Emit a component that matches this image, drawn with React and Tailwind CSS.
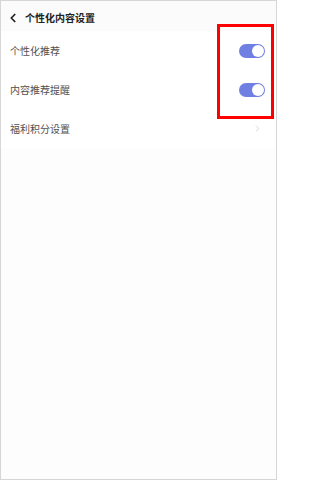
import { ChevronLeft, ChevronRight } from "lucide-react";

function Toggle() {
  return (
    <div className="w-[26px] h-[14px] rounded-full bg-[#6f80e2] flex items-center justify-end px-[1px]">
      <div className="w-[12px] h-[12px] rounded-full bg-white" />
    </div>
  );
}

function Row({ label, right }) {
  return (
    <div className="h-[39px] flex items-center justify-between pl-[9px] pr-[11px]">
      <span className="text-[10px] text-[#505050]">{label}</span>
      {right}
    </div>
  );
}

export default function App() {
  return (
    <div
      className="relative w-[277px] h-[480px] border border-[#d6d6d6] bg-[#fdfdfd] overflow-hidden"
      style={{ fontFamily: '"Noto Sans CJK SC", "Noto Sans", sans-serif' }}
    >
      <div className="h-[30px] pt-[3px] flex items-center gap-[5px] pl-[5px] bg-[#fbfbfb]">
        <ChevronLeft size={14} strokeWidth={3} className="text-[#222]" />
        <span className="text-[10px] font-bold text-[#222]">个性化内容设置</span>
      </div>
      <div className="bg-white">
        <Row label="个性化推荐" right={<Toggle />} />
        <Row label="内容推荐提醒" right={<Toggle />} />
        <Row
          label="福利积分设置"
          right={<ChevronRight size={11} strokeWidth={1.5} className="text-[#c4c4c4] mr-[2px]" />}
        />
      </div>

      {/* annotation box */}
      <div className="absolute left-[216px] top-[23px] w-[57px] h-[95px] border-[3px] border-[#ff0000]" />
    </div>
  );
}
